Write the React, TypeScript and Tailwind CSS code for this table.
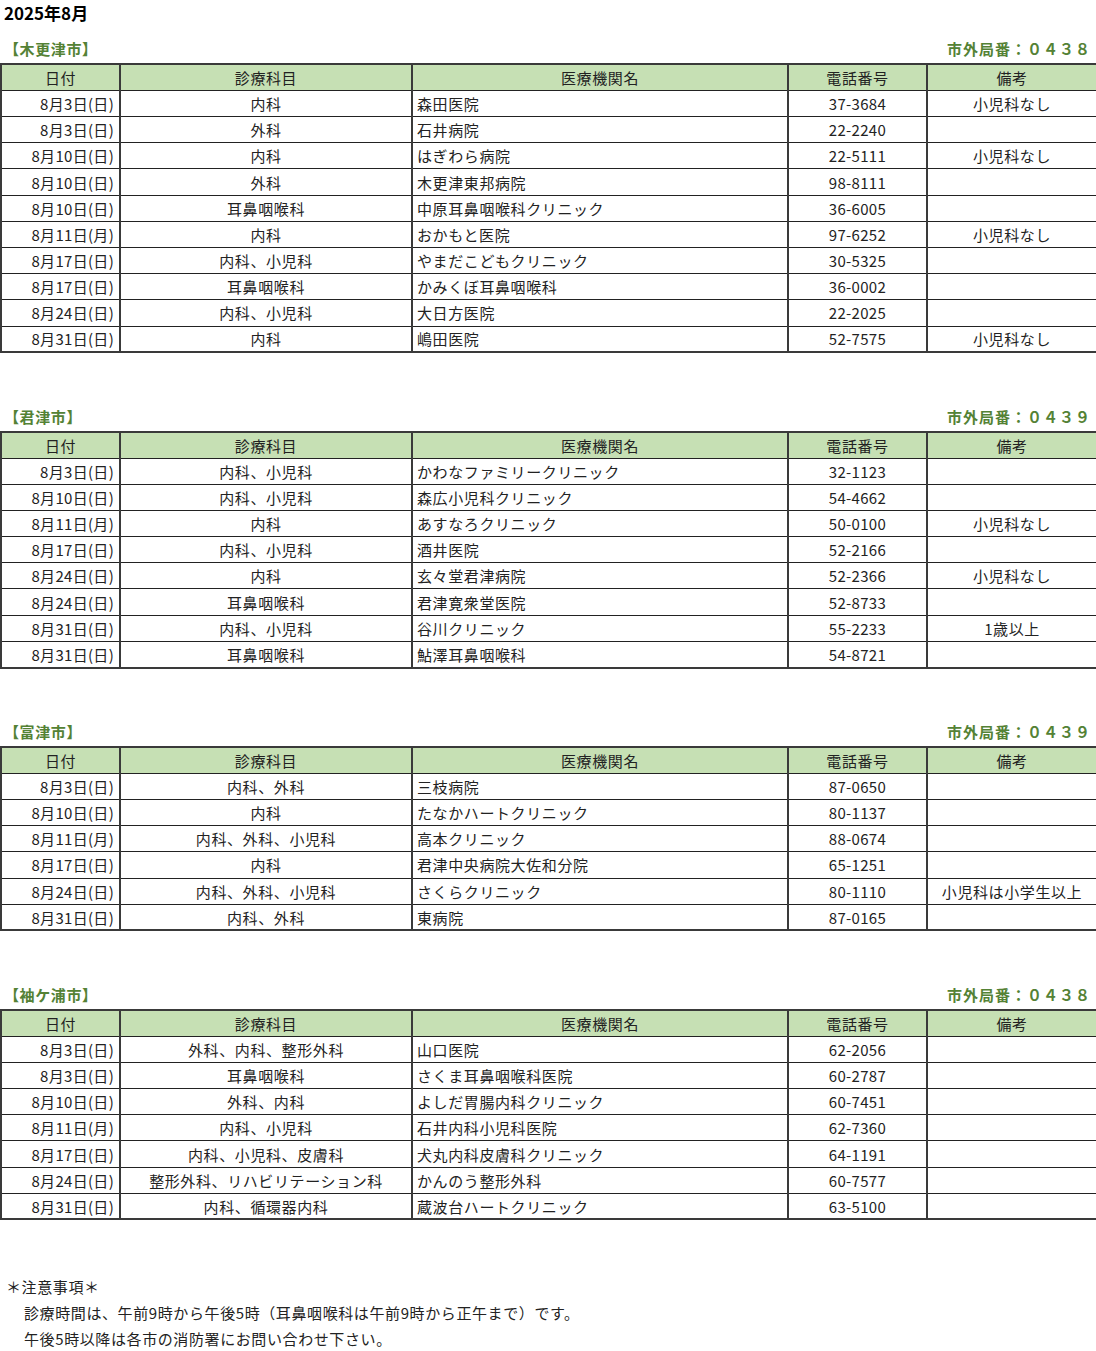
import React from 'react';

type Row = [string, string, string, string, string?];

const sections: { city: string; code: string; rows: Row[] }[] = [
  {
    city: '【木更津市】',
    code: '市外局番：０４３８',
    rows: [
      ['8月3日(日)', '内科', '森田医院', '37-3684', '小児科なし'],
      ['8月3日(日)', '外科', '石井病院', '22-2240'],
      ['8月10日(日)', '内科', 'はぎわら病院', '22-5111', '小児科なし'],
      ['8月10日(日)', '外科', '木更津東邦病院', '98-8111'],
      ['8月10日(日)', '耳鼻咽喉科', '中原耳鼻咽喉科クリニック', '36-6005'],
      ['8月11日(月)', '内科', 'おかもと医院', '97-6252', '小児科なし'],
      ['8月17日(日)', '内科、小児科', 'やまだこどもクリニック', '30-5325'],
      ['8月17日(日)', '耳鼻咽喉科', 'かみくぼ耳鼻咽喉科', '36-0002'],
      ['8月24日(日)', '内科、小児科', '大日方医院', '22-2025'],
      ['8月31日(日)', '内科', '嶋田医院', '52-7575', '小児科なし'],
    ],
  },
  {
    city: '【君津市】',
    code: '市外局番：０４３９',
    rows: [
      ['8月3日(日)', '内科、小児科', 'かわなファミリークリニック', '32-1123'],
      ['8月10日(日)', '内科、小児科', '森広小児科クリニック', '54-4662'],
      ['8月11日(月)', '内科', 'あすなろクリニック', '50-0100', '小児科なし'],
      ['8月17日(日)', '内科、小児科', '酒井医院', '52-2166'],
      ['8月24日(日)', '内科', '玄々堂君津病院', '52-2366', '小児科なし'],
      ['8月24日(日)', '耳鼻咽喉科', '君津寛衆堂医院', '52-8733'],
      ['8月31日(日)', '内科、小児科', '谷川クリニック', '55-2233', '1歳以上'],
      ['8月31日(日)', '耳鼻咽喉科', '鮎澤耳鼻咽喉科', '54-8721'],
    ],
  },
  {
    city: '【富津市】',
    code: '市外局番：０４３９',
    rows: [
      ['8月3日(日)', '内科、外科', '三枝病院', '87-0650'],
      ['8月10日(日)', '内科', 'たなかハートクリニック', '80-1137'],
      ['8月11日(月)', '内科、外科、小児科', '高本クリニック', '88-0674'],
      ['8月17日(日)', '内科', '君津中央病院大佐和分院', '65-1251'],
      ['8月24日(日)', '内科、外科、小児科', 'さくらクリニック', '80-1110', '小児科は小学生以上'],
      ['8月31日(日)', '内科、外科', '東病院', '87-0165'],
    ],
  },
  {
    city: '【袖ケ浦市】',
    code: '市外局番：０４３８',
    rows: [
      ['8月3日(日)', '外科、内科、整形外科', '山口医院', '62-2056'],
      ['8月3日(日)', '耳鼻咽喉科', 'さくま耳鼻咽喉科医院', '60-2787'],
      ['8月10日(日)', '外科、内科', 'よしだ胃腸内科クリニック', '60-7451'],
      ['8月11日(月)', '内科、小児科', '石井内科小児科医院', '62-7360'],
      ['8月17日(日)', '内科、小児科、皮膚科', '犬丸内科皮膚科クリニック', '64-1191'],
      ['8月24日(日)', '整形外科、リハビリテーション科', 'かんのう整形外科', '60-7577'],
      ['8月31日(日)', '内科、循環器内科', '蔵波台ハートクリニック', '63-5100'],
    ],
  },
];

const cell = 'h-[26.2px] border-y border-x-2 border-y-[#222] border-x-[#3a3a3a] p-0 leading-none';

export default function App() {
  return (
    <div className="w-[1096px] bg-white text-[15px] text-[#222] tracking-[0.6px] font-['Noto_Sans_CJK_JP','Noto_Sans',sans-serif]">
      <div className="h-[26px] pl-1 flex items-center text-[17px] font-bold text-black tracking-normal">2025年8月</div>

      {sections.map((s, i) => (
        <div key={s.city} className={i === 0 ? 'mt-[11px]' : 'mt-[51.4px]'}>
          <div className="h-[26.2px] flex items-center justify-between pl-1 pr-[5px] pb-[1px] font-bold text-[#548235]">
            <span>{s.city}</span>
            <span className="tracking-[1px]">{s.code}</span>
          </div>
          <table className="w-[1096px] table-fixed border-collapse border-2 border-[#3a3a3a]">
            <colgroup>
              <col className="w-[119px]" />
              <col className="w-[292px]" />
              <col className="w-[376px]" />
              <col className="w-[139px]" />
              <col className="w-[170px]" />
            </colgroup>
            <thead>
              <tr className="bg-[#c6e0b4]">
                <th className={`${cell} font-normal text-center`}>日付</th>
                <th className={`${cell} font-normal text-center`}>診療科目</th>
                <th className={`${cell} font-normal text-center`}>医療機関名</th>
                <th className={`${cell} font-normal text-center`}>電話番号</th>
                <th className={`${cell} font-normal text-center`}>備考</th>
              </tr>
            </thead>
            <tbody>
              {s.rows.map((r, j) => (
                <tr key={j}>
                  <td className={`${cell} text-right pr-[5px] tracking-[0.3px]`}>{r[0]}</td>
                  <td className={`${cell} text-center`}>{r[1]}</td>
                  <td className={`${cell} text-left pl-[4px]`}>{r[2]}</td>
                  <td className={`${cell} text-center tracking-[0.3px]`}>{r[3]}</td>
                  <td className={`${cell} text-center`}>{r[4] ?? ''}</td>
                </tr>
              ))}
            </tbody>
          </table>
        </div>
      ))}

      <div className="mt-[53.4px] pl-[6px] flex flex-col">
        <div className="h-[26.2px] flex items-center">＊注意事項＊</div>
        <div className="h-[26.2px] flex items-center pl-[18px]">診療時間は、午前9時から午後5時（耳鼻咽喉科は午前9時から正午まで）です。</div>
        <div className="h-[26.2px] flex items-center pl-[18px]">午後5時以降は各市の消防署にお問い合わせ下さい。</div>
      </div>
    </div>
  );
}
